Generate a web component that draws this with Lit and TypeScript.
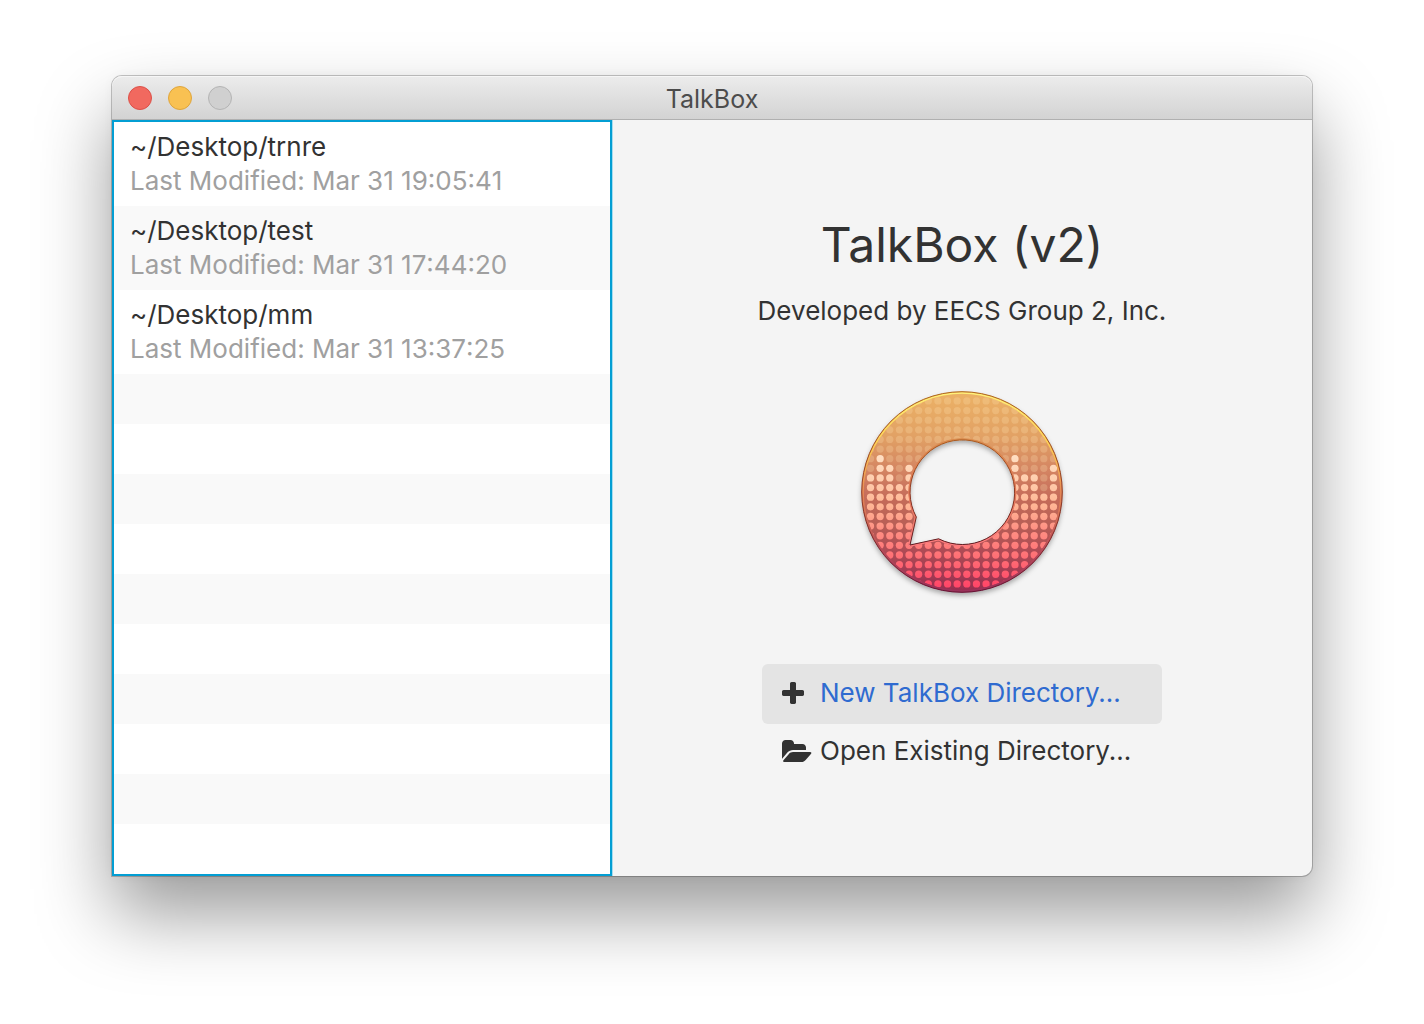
import { LitElement, html, css, svg } from "lit";
import { customElement, property } from "lit/decorators.js";

interface Project {
  path: string;
  modified: string;
}

const PROJECTS: Project[] = [
  { path: "~/Desktop/trnre", modified: "Mar 31 19:05:41" },
  { path: "~/Desktop/test", modified: "Mar 31 17:44:20" },
  { path: "~/Desktop/mm", modified: "Mar 31 13:37:25" },
];

const EMPTY_ROWS = 10;

/** Round logo: a dotted ring with a speech bubble cut out of its middle. */
@customElement("talkbox-logo")
export class TalkboxLogo extends LitElement {
  static styles = css`
    :host {
      display: block;
      line-height: 0;
    }
    .logo {
      overflow: visible;
    }
  `;

  // First lit row for the outer columns, by column number counted from the left.
  private static readonly levels: Record<number, number> = {
    0: 8, 1: 6, 2: 7, 3: 9, 4: 7,
    15: 6, 16: 8, 17: 8, 18: 10, 19: 7,
  };

  private dots(lit: boolean) {
    const pitch = 9.63;
    const out = [];
    for (let col = 0; col < 20; col++) {
      const from = TalkboxLogo.levels[col] ?? 12;
      for (let row = 0; row < 20; row++) {
        if (row >= from !== lit) continue;
        out.push(svg`<circle cx=${101 + (col - 9.5) * pitch} cy=${101.4 + (row - 9.5) * pitch} r="3.65"></circle>`);
      }
    }
    return out;
  }

  render() {
    const bubble = "M55.300 126 A52.300 52.300 0 1 1 77.600 147.800 L49 154 Z";
    return html`
      <svg class="logo" width="202" height="202" viewBox="0 0 202 202" role="img" aria-label="TalkBox logo">
        <defs>
          <linearGradient id="base" gradientUnits="userSpaceOnUse" x1="0" y1="0" x2="0" y2="202">
            <stop offset="0" stop-color="#ecb265"></stop>
            <stop offset="0.22" stop-color="#e2a265"></stop>
            <stop offset="0.4" stop-color="#d38362"></stop>
            <stop offset="0.52" stop-color="#c66d5a"></stop>
            <stop offset="0.65" stop-color="#b96056"></stop>
            <stop offset="0.8" stop-color="#ae4a54"></stop>
            <stop offset="1" stop-color="#962c50"></stop>
          </linearGradient>
          <linearGradient id="bright" gradientUnits="userSpaceOnUse" x1="0" y1="60" x2="0" y2="200">
            <stop offset="0" stop-color="#ffe2c6"></stop>
            <stop offset="0.2" stop-color="#ffceae"></stop>
            <stop offset="0.38" stop-color="#ffb795"></stop>
            <stop offset="0.56" stop-color="#ff9083"></stop>
            <stop offset="0.74" stop-color="#ff7276"></stop>
            <stop offset="1" stop-color="#ff4066"></stop>
          </linearGradient>
          <linearGradient id="rim" gradientUnits="userSpaceOnUse" x1="0" y1="0" x2="0" y2="202">
            <stop offset="0" stop-color="#b06a1c"></stop>
            <stop offset="0.45" stop-color="#964322"></stop>
            <stop offset="1" stop-color="#641334"></stop>
          </linearGradient>
          <linearGradient id="shine" gradientUnits="userSpaceOnUse" x1="0" y1="0" x2="0" y2="202">
            <stop offset="0" stop-color="#fff27a"></stop>
            <stop offset="0.25" stop-color="#ffd452"></stop>
            <stop offset="0.5" stop-color="#e88a55"></stop>
            <stop offset="0.8" stop-color="#b8485a"></stop>
            <stop offset="1" stop-color="#98305a"></stop>
          </linearGradient>
          <linearGradient id="lip" gradientUnits="userSpaceOnUse" x1="0" y1="49" x2="0" y2="155">
            <stop offset="0" stop-color="#d98a4c"></stop>
            <stop offset="0.5" stop-color="#e57a58"></stop>
            <stop offset="1" stop-color="#ff7c80"></stop>
          </linearGradient>
          <linearGradient id="cut" gradientUnits="userSpaceOnUse" x1="0" y1="49" x2="0" y2="155">
            <stop offset="0" stop-color="#a85a22"></stop>
            <stop offset="0.5" stop-color="#8c3a26"></stop>
            <stop offset="1" stop-color="#5c1c22"></stop>
          </linearGradient>
          <mask id="ring">
            <circle cx="101" cy="101" r="98.300" fill="#fff"></circle>
            <path d=${bubble} fill="#000" stroke="#000" stroke-width="3"></path>
          </mask>
          <mask id="outside" maskUnits="userSpaceOnUse" x="0" y="0" width="202" height="202">
            <rect width="202" height="202" fill="#fff"></rect>
            <path d=${bubble} fill="#000"></path>
          </mask>
          <filter id="shade" x="-10%" y="-10%" width="120%" height="125%">
            <feDropShadow dx="0" dy="3" stdDeviation="2.500" flood-color="#000" flood-opacity="0.32"></feDropShadow>
          </filter>
        </defs>
        <path
          d="M101 0.500 A100.500 100.500 0 1 1 101 201.500 A100.500 100.500 0 1 1 101 0.500 Z ${bubble}"
          fill="url(#base)"
          fill-rule="evenodd"
          filter="url(#shade)"
        ></path>
        <g mask="url(#ring)">
          <g fill="#ffe4b4" fill-opacity="0.25">${this.dots(false)}</g>
          <g fill="url(#bright)">${this.dots(true)}</g>
        </g>
        <circle cx="101" cy="101" r="99" fill="none" stroke="url(#shine)" stroke-width="1.600"></circle>
        <circle cx="101" cy="101" r="100.300" fill="none" stroke="url(#rim)" stroke-width="1"></circle>
        <path d=${bubble} fill="none" stroke="url(#lip)" stroke-width="3.400" mask="url(#outside)"></path>
        <path d=${bubble} fill="none" stroke="url(#cut)" stroke-width="1"></path>
      </svg>
    `;
  }
}

@customElement("recent-list")
export class RecentList extends LitElement {
  @property({ attribute: false }) projects: Project[] = [];

  static styles = css`
    :host {
      display: block;
    }
    .list {
      margin: 0;
      padding: 0;
      list-style: none;
      border: 2px solid #039ed3;
      box-shadow: 1px 0 0 #a6dcee;
      background: #fff;
    }
    .row:nth-child(even) {
      background: #f9f9f9;
    }
    .empty {
      height: 50px;
    }
    .entry {
      display: block;
      width: 100%;
      padding: 8px 16px;
      border: 0;
      background: none;
      font: inherit;
      line-height: 34px;
      text-align: left;
      color: #323232;
    }
    .path,
    .date {
      display: block;
    }
    .date {
      color: #a0a0a0;
      font-kerning: none;
    }
  `;

  render() {
    return html`
      <ul class="list">
        ${this.projects.map(
          (p) => html`
            <li class="row">
              <button class="entry" type="button">
                <span class="path">${p.path}</span>
                <span class="date">Last Modified: ${p.modified}</span>
              </button>
            </li>
          `,
        )}
        ${Array.from({ length: EMPTY_ROWS }, () => html`<li class="row empty" aria-hidden="true"></li>`)}
      </ul>
    `;
  }
}

@customElement("app-root")
export class AppRoot extends LitElement {
  static styles = css`
    :host {
      display: block;
      box-sizing: border-box;
      min-height: 100vh;
      padding: 76px 112px 148px;
      background: #fff;
      overflow: hidden;
      font-family: Inter, "Liberation Sans", sans-serif;
      font-size: 26px;
      color: #323232;
    }
    .window {
      border-radius: 10px 10px 10px 0;
      background: #f4f4f4;
      box-shadow:
        0 0 0 1px rgba(0, 0, 0, 0.22),
        0 0 12px rgba(0, 0, 0, 0.04),
        0 38px 74px rgba(0, 0, 0, 0.4);
    }
    .titlebar {
      display: grid;
      grid-template-columns: 1fr auto 1fr;
      align-items: center;
      box-sizing: border-box;
      height: 44px;
      padding: 0 16px;
      border-bottom: 1px solid #b0b0b0;
      border-radius: 10px 10px 0 0;
      background: linear-gradient(#ececec, #d3d3d3);
      box-shadow: inset 0 1px 0 #f6f6f6;
    }
    .controls {
      display: flex;
      gap: 16px;
    }
    .control {
      width: 24px;
      height: 24px;
      padding: 0;
      border: 1px solid #b4b4b4;
      border-radius: 50%;
      background: #d0d0d0;
    }
    .close {
      border-color: #dc5048;
      background: #f1695f;
    }
    .minimize {
      border-color: #dfa53c;
      background: #f9c152;
    }
    .caption {
      margin: 0;
      padding-top: 2px;
      font-size: 25px;
      font-weight: 400;
      line-height: 32px;
      color: #4c4c4c;
    }
    .body {
      display: grid;
      grid-template-columns: 5fr 7fr;
    }
    .welcome {
      display: flex;
      flex-direction: column;
      align-items: center;
      padding: 95px 24px 0;
    }
    .title {
      margin: 0;
      font-size: 48px;
      font-weight: 400;
      line-height: 60px;
    }
    .credit {
      margin: 20px 0 64px;
      line-height: 32px;
    }
    .actions {
      display: flex;
      flex-direction: column;
      width: 100%;
      max-width: 400px;
      margin-top: 71px;
    }
    .action {
      display: flex;
      align-items: center;
      gap: 8px;
      padding: 11px 20px 13px;
      border: 0;
      border-radius: 6px;
      background: none;
      font: inherit;
      line-height: 32px;
      text-align: left;
      white-space: nowrap;
      color: inherit;
    }
    .primary {
      padding: 13px 20px 15px;
      background: #e4e4e4;
    }
    .primary .label {
      color: #2f6bd0;
    }
    .icon {
      flex: none;
      width: 30px;
      height: 22px;
      fill: #323232;
    }
  `;

  render() {
    return html`
      <main class="window">
        <header class="titlebar">
          <div class="controls">
            <button class="control close" type="button" aria-label="Close"></button>
            <button class="control minimize" type="button" aria-label="Minimize"></button>
            <button class="control" type="button" aria-label="Zoom" disabled></button>
          </div>
          <h1 class="caption">TalkBox</h1>
        </header>
        <div class="body">
          <recent-list .projects=${PROJECTS}></recent-list>
          <section class="welcome">
            <h2 class="title">TalkBox (v2)</h2>
            <p class="credit">Developed by EECS Group 2, Inc.</p>
            <talkbox-logo></talkbox-logo>
            <div class="actions">
              <button class="action primary" type="button">
                <svg class="icon" viewBox="192 128 1408 1408" preserveAspectRatio="xMinYMid meet" aria-hidden="true">
                  <path d="M1600 736v192q0 40-28 68t-68 28h-416v416q0 40-28 68t-68 28H800q-40 0-68-28t-28-68v-416H288q-40 0-68-28t-28-68V736q0-40 28-68t68-28h416V224q0-40 28-68t68-28h192q40 0 68 28t28 68v416h416q40 0 68 28t28 68z"></path>
                </svg>
                <span class="label">New TalkBox Directory...</span>
              </button>
              <button class="action" type="button">
                <svg class="icon" viewBox="64 128 1880 1408" preserveAspectRatio="xMinYMid meet" aria-hidden="true">
                  <path d="M1943 952q0 31-31 66l-336 396q-43 51-120.500 86.500T1312 1536H224q-34 0-60.500-13t-26.500-43q0-31 31-66l336-396q43-51 120.500-86.500T768 896h1088q34 0 60.500 13t26.500 43zm-343-344v160H768q-94 0-197 47.500T407 935L70 1331l-5 6q0-4-.5-12.500T64 1312V352q0-92 66-158t158-66h320q92 0 158 66t66 158v32h544q92 0 158 66t66 158z"></path>
                </svg>
                <span class="label">Open Existing Directory...</span>
              </button>
            </div>
          </section>
        </div>
      </main>
    `;
  }
}
